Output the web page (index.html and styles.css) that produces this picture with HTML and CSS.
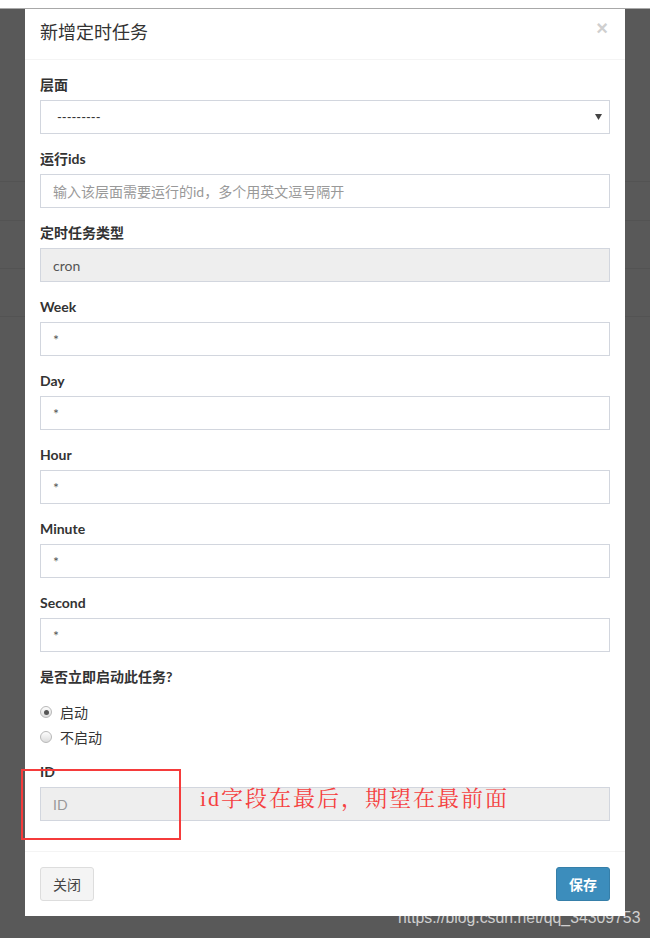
FILE: index.html
```html
<!DOCTYPE html>
<html lang="zh-CN">
<head>
<meta charset="utf-8">
<title>新增定时任务</title>
<link rel="stylesheet" href="styles.css">
</head>
<body>
<div class="topbar"></div>
<div class="modal">
  <div class="modal-header">
    <h4 class="modal-title">新增定时任务</h4>
    <span class="close">×</span>
  </div>
  <div class="modal-body">
    <div class="form-group">
      <label class="control-label">层面</label>
      <div class="form-control select">
        <span>---------</span>
        <svg class="caret" width="7" height="6" viewBox="0 0 7 6"><path d="M0 0H7L3.5 6Z" fill="#444"/></svg>
      </div>
    </div>
    <div class="form-group">
      <label class="control-label">运行ids</label>
      <div class="form-control placeholder">输入该层面需要运行的id，多个用英文逗号隔开</div>
    </div>
    <div class="form-group">
      <label class="control-label">定时任务类型</label>
      <div class="form-control disabled">cron</div>
    </div>
    <div class="form-group">
      <label class="control-label">Week</label>
      <div class="form-control">*</div>
    </div>
    <div class="form-group">
      <label class="control-label">Day</label>
      <div class="form-control">*</div>
    </div>
    <div class="form-group">
      <label class="control-label">Hour</label>
      <div class="form-control">*</div>
    </div>
    <div class="form-group">
      <label class="control-label">Minute</label>
      <div class="form-control">*</div>
    </div>
    <div class="form-group">
      <label class="control-label">Second</label>
      <div class="form-control">*</div>
    </div>
    <div class="radio-group">
      <label class="control-label">是否立即启动此任务?</label>
      <div class="radio first"><span class="dot checked"></span><span>启动</span></div>
      <div class="radio"><span class="dot"></span><span>不启动</span></div>
    </div>
    <div class="form-group last">
      <label class="control-label">ID</label>
      <div class="form-control disabled placeholder">ID</div>
    </div>
  </div>
  <div class="modal-footer">
    <button class="btn btn-default">关闭</button>
    <button class="btn btn-primary">保存</button>
  </div>
</div>
<div class="annot-box"></div>
<div class="annot-text">id字段在最后，期望在最前面</div>
<div class="watermark">https://blog.csdn.net/qq_34309753</div>
</body>
</html>
```
FILE: styles.css
```css
html, body {
  margin: 0;
  padding: 0;
}
body {
  width: 650px;
  height: 938px;
  overflow: hidden;
  position: relative;
  background-color: #595959;
  background-image:
    linear-gradient(#535353, #535353),
    linear-gradient(#535353, #535353),
    linear-gradient(#535353, #535353),
    linear-gradient(#535353, #535353);
  background-repeat: no-repeat;
  background-size: 100% 1px;
  background-position: 0 181px, 0 220px, 0 268px, 0 316px;
  font-family: Lato, "Noto Sans CJK SC", sans-serif;
  font-size: 14px;
  color: #333;
}
.topbar {
  height: 8px;
  background: #fff;
  border-bottom: 1px solid #a8a8a8;
}
.modal {
  width: 600px;
  margin: 0 auto;
  background: #fff;
}
.modal-header {
  display: flex;
  justify-content: space-between;
  align-items: flex-start;
  padding: 12px 15px 18px;
  border-bottom: 1px solid #f4f4f4;
}
.modal-title {
  margin: 0;
  font-size: 18px;
  font-weight: normal;
  line-height: 20px;
  color: #333;
  font-family: "Noto Sans CJK SC", sans-serif;
}
.close {
  font-size: 20px;
  font-weight: bold;
  line-height: 14px;
  color: #cfcfcf;
  margin: 0 2px 0 0;
  font-family: "Liberation Sans", sans-serif;
}
.modal-body {
  padding: 15px 15px 15px;
}
.form-group {
  margin-bottom: 15px;
}
.control-label {
  display: block;
  font-weight: bold;
  line-height: 20px;
  margin-bottom: 5px;
  font-size: 14px;
  color: #333;
}
.form-control {
  box-sizing: border-box;
  height: 34px;
  border: 1px solid #d2d6de;
  padding: 0 12px;
  display: flex;
  align-items: center;
  color: #555;
  font-size: 14px;
  background: #fff;
}
.form-control.placeholder {
  color: #999;
}
.form-control.disabled {
  background: #eee;
}
.form-control.select {
  justify-content: space-between;
  padding: 0 7px 0 16px;
  color: #333;
  font-size: 13px;
}
.caret {
  display: block;
}
.radio-group .control-label {
  margin-bottom: 15px;
}
.radio {
  display: flex;
  align-items: center;
  height: 20px;
  margin-bottom: 5px;
  color: #333;
  font-family: "Noto Sans CJK SC", sans-serif;
}
.radio:last-child {
  margin-bottom: 15px;
}
.dot {
  box-sizing: border-box;
  width: 12px;
  height: 12px;
  border-radius: 50%;
  border: 1px solid #b8b8b8;
  background: linear-gradient(#fdfdfd, #dcdcdc);
  margin: 0 8px 0 0;
  display: flex;
  align-items: center;
  justify-content: center;
}
.dot.checked::after {
  content: "";
  width: 5px;
  height: 5px;
  border-radius: 50%;
  background: #555;
}
.modal-footer {
  display: flex;
  justify-content: space-between;
  padding: 15px;
  border-top: 1px solid #f4f4f4;
}
.btn {
  box-sizing: border-box;
  height: 34px;
  padding: 0 12px;
  font-size: 14px;
  font-family: "Noto Sans CJK SC", sans-serif;
  border-radius: 3px;
  border: 1px solid #ddd;
  line-height: 32px;
}
.btn-default {
  background: #f4f4f4;
  color: #444;
}
.btn-primary {
  background: #3c8dbc;
  border-color: #367fa9;
  color: #fff;
  font-weight: bold;
}
.annot-box {
  position: absolute;
  left: 21px;
  top: 769px;
  width: 156px;
  height: 67px;
  border: 2px solid #f53b3b;
}
.annot-text {
  position: absolute;
  left: 200px;
  top: 785px;
  font-size: 22px;
  line-height: 28px;
  letter-spacing: 2px;
  color: #f54040;
  font-family: "Liberation Serif", "Noto Serif CJK SC", "Noto Sans CJK SC", serif;
}
.watermark {
  position: absolute;
  left: 398px;
  top: 908px;
  font-size: 15.8px;
  line-height: 20px;
  color: rgba(255, 255, 255, 0.72);
  font-family: "Liberation Sans", sans-serif;
}
```
